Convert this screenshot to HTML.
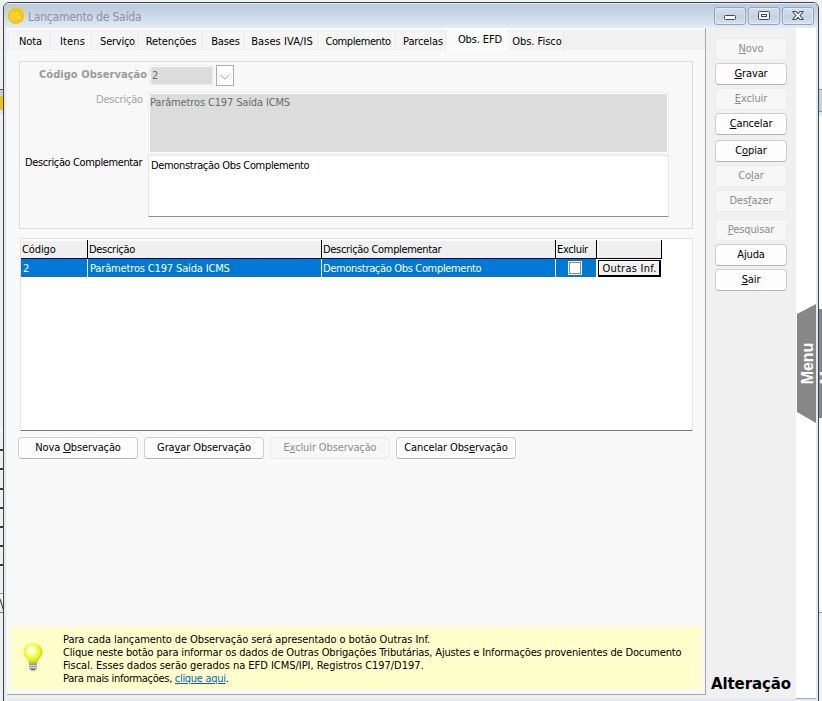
<!DOCTYPE html>
<html lang="pt-BR">
<head>
<meta charset="utf-8">
<title>Lançamento de Saída</title>
<style>
html,body{margin:0;padding:0;}
body{width:822px;height:701px;overflow:hidden;position:relative;background:#f3f3f3;
 font-family:"DejaVu Sans Condensed","Liberation Sans",sans-serif;font-size:11px;color:#000;letter-spacing:-0.12px;}
*{box-sizing:border-box;}
.abs{position:absolute;}
/* background behind the window */
#bgleft{left:0;top:0;width:4px;height:701px;background:#f0f0f0;}
#bgleft i{position:absolute;left:0;width:4px;height:1px;background:#2b2b2b;display:block;}
#bgright{left:818px;top:0;width:4px;height:701px;background:#fafafa;}
#bgright i{position:absolute;left:0;width:4px;display:block;}
/* window frame */
#win{left:3px;top:2px;width:816px;height:705px;border:1px solid #3f434a;border-radius:6px 6px 0 0;
 background:#e1e9f3;overflow:hidden;}
#titlebar{left:0;top:0;width:814px;height:25px;background:linear-gradient(#e6edf6 0,#e6edf6 1px,#bccbdd 1px,#c3d1e2 8px,#d3dfed 17px,#dbe6f2 22px,#e8eef6 25px);}
#title{left:24px;top:6px;font-size:12px;color:#8b919b;letter-spacing:-0.2px;white-space:nowrap;line-height:16px;}
.tbtn{top:4px;width:32px;height:18px;border:1px solid #93a4bb;border-radius:3px;background:linear-gradient(#d4dfec,#c3d2e4 55%,#d6e1ee);box-shadow:inset 0 0 0 1px rgba(255,255,255,.35);}
#client{left:3px;top:25px;width:809px;height:671px;background:#f0f0f0;}
#clienttop{left:0;top:0;width:699px;height:2px;background:#fbfbfb;}
/* tab strip */
#tabs{left:0;top:2px;width:698px;height:20px;background:#f1f1f1;}
.tab{top:2px;height:17px;line-height:19px;text-align:center;white-space:nowrap;background:#f5f5f5;border-left:1px solid #fbfbfb;border-right:1px solid #e9e9e9;}
.tab.sel{top:0px;height:21px;line-height:19px;background:#fafafa;border-color:#fafafa;}
#page{left:0;top:22px;width:699px;height:645px;background:#f9f9f9;border-bottom:1px solid #a6a6a6;}
#vline{left:698px;top:0;width:1px;height:667px;background:#a6a6a6;}
/* right panel */
#rpanel{left:699px;top:0;width:90px;height:671px;background:#f0f0f0;}
#rwhite{left:789px;top:0;width:20px;height:671px;background:#fff;border-bottom:1px solid #a9a9a9;}
.btn{height:22px;border:1px solid #cfcfcf;border-bottom-color:#b4b4b4;border-radius:4px;background:#fdfdfd;text-align:center;line-height:20px;white-space:nowrap;color:#000;}
.btn.dis{background:#f7f7f7;border-color:#ececec;color:#8c8c8c;}
.btn u{text-decoration:underline;text-underline-offset:1px;}
.rb{left:9px;width:72px;}
/* group box */
#grp{left:12px;top:33px;width:674px;height:168px;border:1px solid #dcdcdc;background:#f8f8f8;box-shadow:inset 1px 1px 0 #fdfdfd;}
.lbl{white-space:nowrap;line-height:13px;}
/* grid */
#grid{left:13px;top:210px;width:673px;height:193px;background:#fff;border:1px solid #e3e3e3;border-bottom:1px solid #7a7a7a;}
.hd{top:1px;height:19px;background:#efefef;border-right:1px solid #000;border-bottom:1px solid #000;line-height:19px;padding-left:1px;white-space:nowrap;box-shadow:inset 1px 1px 0 #fafafa;}
.cell{top:20px;height:18px;background:#0078d7;color:#fff;line-height:19px;padding-left:2px;white-space:nowrap;}
/* info box */
#info{left:4px;top:599px;width:690px;height:63px;background:#ffffcc;}
#info .ln{position:absolute;left:52px;white-space:nowrap;line-height:13px;}
#info a{color:#0563c1;text-decoration:underline;}
</style>
</head>
<body>
<div id="bgleft" class="abs"><i style="top:89px;background:#555"></i><i style="top:90px;height:6px;background:#c5cdd8"></i><i style="top:96px;height:14px;background:#f0c31a"></i><i style="top:110px;height:4px;background:#dde3ea"></i><i style="top:430px;background:#fff"></i><i style="top:449px;height:2px;background:#3a3a3a"></i><i style="top:468px;height:2px;background:#3a3a3a"></i><i style="top:488px;height:2px;background:#3a3a3a"></i><i style="top:507px;height:2px;background:#3a3a3a"></i><i style="top:526px;height:2px;background:#3a3a3a"></i><i style="top:545px;height:2px;background:#3a3a3a"></i><i style="top:564px;height:2px;background:#3a3a3a"></i><i style="top:593px;background:#999"></i><i style="top:612px;background:#777"></i><svg class="abs" style="left:0;top:598px" width="4" height="14"><path d="M0 1 L3.5 12" stroke="#555" stroke-width="1.2" fill="none"/></svg></div>
<div id="bgright" class="abs"><i style="top:0;height:89px;background:#f4f4f4"></i><i style="top:89px;height:23px;background:#c9d3df"></i><i style="top:89px;height:1px;background:#8a929c"></i><i style="top:111px;height:1px;background:#8a929c"></i><i style="top:112px;height:4px;background:#e1e7ee"></i><i style="top:309px;height:109px;background:#878787"></i><svg class="abs" style="left:0;top:300px;overflow:hidden" width="4" height="125" viewBox="0 0 4 125"><text transform="translate(13.6,84.2) rotate(-90)" font-family="Liberation Sans, sans-serif" font-weight="bold" font-size="16" fill="#fff">Menu</text></svg><i style="top:612px;height:1px;background:#9a9a9a"></i><i style="top:613px;height:88px;background:#f0f0f0"></i></div>

<div id="win" class="abs">
  <div id="titlebar" class="abs"></div>
  
  <svg class="abs" style="left:3px;top:4px" width="18" height="18" viewBox="0 0 18 18">
    <circle cx="9" cy="9" r="8.3" fill="#f6c70f"/>
    <path d="M4.8 5.6 H9.4 M4.8 5.6 V12 H10.2" fill="none" stroke="#fbdf6e" stroke-width="1"/>
    <path d="M6 7.6 H7.6 M6 9.4 H7.4" fill="none" stroke="#fbdf6e" stroke-width="0.9"/>
    <circle cx="10.4" cy="8.6" r="1.9" fill="none" stroke="#fbe27c" stroke-width="1"/>
    <path d="M11.8 10.1 L13.2 11.8" stroke="#fff0ad" stroke-width="1.3"/>
  </svg>
  <div class="abs tbtn" style="left:710px">
    <div class="abs" style="left:9px;top:7px;width:12px;height:5px;border:1px solid #454a54;border-radius:1.5px;background:#fff;"></div>
  </div>
  <div class="abs tbtn" style="left:744px">
    <div class="abs" style="left:9px;top:3px;width:12px;height:9px;border:1px solid #454a54;border-radius:1.5px;background:#eef2f7;"><div class="abs" style="left:2px;top:2px;width:6px;height:3px;border:1px solid #454a54;"></div></div>
  </div>
  <div class="abs tbtn" style="left:778px">
    <svg class="abs" style="left:8px;top:2px" width="14" height="12" viewBox="0 0 14 12"><path d="M1.6 1.5 H5 L7 3.7 L9 1.5 H12.4 L9 5.5 L12.4 9.5 H9 L7 7.3 L5 9.5 H1.6 L5 5.5 Z" fill="#f4f6f9" stroke="#4a4f59" stroke-width="1.1" stroke-linejoin="round"/></svg>
  </div>
  <div id="title" class="abs">Lançamento de Saída</div>
  <div class="abs" style="left:2px;top:25px;width:1px;height:680px;background:#f3f6fa"></div>
  <div id="client" class="abs">
    <div id="clienttop" class="abs"></div>
    <div id="tabs" class="abs">
      <div class="abs tab" style="left:3px;width:41px;padding-left:0px">Nota</div>
      <div class="abs tab" style="left:44px;width:41px;padding-left:2px;letter-spacing:0.1px">Itens</div>
      <div class="abs tab" style="left:85px;width:47px;padding-left:4px;letter-spacing:-0.25px">Serviço</div>
      <div class="abs tab" style="left:132px;width:64px;padding-left:0px">Retenções</div>
      <div class="abs tab" style="left:196px;width:42px;padding-left:3px">Bases</div>
      <div class="abs tab" style="left:238px;width:74px;padding-left:0px;letter-spacing:0.08px">Bases IVA/IS</div>
      <div class="abs tab" style="left:312px;width:77px;padding-left:1px;letter-spacing:-0.42px">Complemento</div>
      <div class="abs tab" style="left:389px;width:50px;padding-left:4px">Parcelas</div>
      <div class="abs tab sel" style="left:439px;width:61px;padding-left:7px">Obs. EFD</div>
      <div class="abs tab" style="left:500px;width:57px;padding-left:3px;letter-spacing:-0.02px">Obs. Fisco</div>
    </div>
    <div id="page" class="abs"></div>
    <div id="vline" class="abs"></div>

    <div id="grp" class="abs"></div>
    <div class="abs lbl" style="left:32px;top:40px;font-weight:bold;color:#9b9b9b;letter-spacing:0.05px;">Código Observação</div>
    <div class="abs" style="left:142px;top:37px;width:64px;height:20px;border:1px solid #ececec;background:#fff;"></div>
    <div class="abs lbl" style="left:144px;top:39px;width:61px;height:17px;background:#dcdcdc;color:#6b6b6b;padding:2px 0 0 1px;">2</div>
    <div class="abs" style="left:209px;top:37px;width:18px;height:21px;border:1px solid #adadad;background:#fff;">
      <svg class="abs" style="left:3px;top:8px" width="10" height="7" viewBox="0 0 10 7"><path d="M1 1.2 L5 5.2 L9 1.2" fill="none" stroke="#9a9a9a" stroke-width="1"/></svg>
    </div>
    <div class="abs lbl" style="left:89px;top:65px;color:#a3a3a3;letter-spacing:-0.2px;">Descrição</div>
    <div class="abs" style="left:141px;top:64px;width:521px;height:62px;border:1px solid #eeeeee;background:#fff;"></div>
    <div class="abs lbl" style="left:143px;top:66px;width:517px;height:58px;background:#dcdcdc;color:#6b6b6b;padding:2px 0 0 0;letter-spacing:-0.14px;">Parâmetros C197 Saída ICMS</div>
    <div class="abs lbl" style="left:18px;top:128px;letter-spacing:-0.38px;">Descrição Complementar</div>
    <div class="abs lbl" style="left:141px;top:127px;width:521px;height:62px;background:#fff;border:1px solid #e4e4e4;border-bottom:1px solid #8e8e8e;padding:3px 0 0 2px;letter-spacing:-0.33px;">Demonstração Obs Complemento</div>

    <div id="grid" class="abs">
      <div class="abs hd" style="left:0;width:67px">Código</div>
      <div class="abs hd" style="left:67px;width:234px;letter-spacing:-0.3px">Descrição</div>
      <div class="abs hd" style="left:301px;width:234px;letter-spacing:-0.33px">Descrição Complementar</div>
      <div class="abs hd" style="left:535px;width:41px;letter-spacing:-0.35px">Excluir</div>
      <div class="abs hd" style="left:576px;width:65px"></div>
      <div class="abs cell" style="left:0;width:66px">2</div>
      <div class="abs cell" style="left:67px;width:233px;letter-spacing:-0.15px">Parâmetros C197 Saída ICMS</div>
      <div class="abs cell" style="left:301px;width:233px;padding-left:1px;letter-spacing:-0.33px">Demonstração Obs Complemento</div>
      <div class="abs cell" style="left:535px;width:40px"></div>
      <div class="abs" style="left:547px;top:22px;width:14px;height:14px;background:#fff;border:1px solid #fff;"><div style="width:12px;height:12px;border:1px solid #8a8a8a;background:#fff"></div></div>
      <div class="abs" style="left:577px;top:21px;width:63px;height:17px;background:#f0f0f0;border:1px solid #000;border-right-width:2px;border-bottom-width:2px;box-shadow:inset 1px 1px 0 #fff;line-height:15px;text-align:center;white-space:nowrap;padding-left:1px;letter-spacing:0.25px;">Outras Inf.</div>
    </div>

    <div class="abs btn" style="left:11px;top:409px;width:120px;">Nova <u>O</u>bservação</div>
    <div class="abs btn" style="left:137px;top:409px;width:120px;">Gra<u>v</u>ar Observação</div>
    <div class="abs btn dis" style="left:263px;top:409px;width:120px;">E<u>x</u>cluir Observação</div>
    <div class="abs btn" style="left:389px;top:409px;width:120px;">Cancelar Obs<u>e</u>rvação</div>

    <div id="info" class="abs">
      <svg class="abs" style="left:11px;top:15px" width="22" height="30" viewBox="0 0 22 30">
        <defs><radialGradient id="bg1" cx="0.42" cy="0.36" r="0.62"><stop offset="0" stop-color="#ffffff"/><stop offset="0.22" stop-color="#ffffe0"/><stop offset="0.45" stop-color="#f8fc5a"/><stop offset="0.75" stop-color="#e6f01e"/><stop offset="1" stop-color="#a8d312"/></radialGradient></defs>
        <path d="M11 1 C5.5 1 1.5 5 1.5 10 C1.5 14 4.5 16 6.5 19.5 L7.2 22 L14.8 22 L15.5 19.5 C17.5 16 20.5 14 20.5 10 C20.5 5 16.5 1 11 1 Z" fill="url(#bg1)"/>
        <rect x="7" y="21.5" width="8" height="6" rx="1" fill="#9a9a9a"/>
        <rect x="7" y="23" width="8" height="1" fill="#d8d8d8"/>
        <rect x="7" y="25" width="8" height="1" fill="#d8d8d8"/>
        <rect x="9" y="27" width="4" height="1.5" fill="#6e6e6e"/>
      </svg>
      <div class="ln" style="top:6px;letter-spacing:-0.08px">Para cada lançamento de Observação será apresentado o botão Outras Inf.</div>
      <div class="ln" style="top:19px;letter-spacing:-0.15px">Clique neste botão para informar os dados de Outras Obrigações Tributárias, Ajustes e Informações provenientes de Documento</div>
      <div class="ln" style="top:32px;letter-spacing:-0.03px">Fiscal. Esses dados serão gerados na EFD ICMS/IPI, Registros C197/D197.</div>
      <div class="ln" style="top:45px;letter-spacing:-0.3px">Para mais informações, <a>clique aqui</a>.</div>
    </div>

    <div id="rpanel" class="abs">
      <div class="abs btn rb dis" style="top:10px"><u>N</u>ovo</div>
      <div class="abs btn rb" style="top:35px"><u>G</u>ravar</div>
      <div class="abs btn rb dis" style="top:60px"><u>E</u>xcluir</div>
      <div class="abs btn rb" style="top:85px"><u>C</u>ancelar</div>
      <div class="abs btn rb" style="top:112px">C<u>o</u>piar</div>
      <div class="abs btn rb dis" style="top:137px">Co<u>l</u>ar</div>
      <div class="abs btn rb dis" style="top:162px">Des<u>f</u>azer</div>
      <div class="abs btn rb dis" style="top:191px"><u>P</u>esquisar</div>
      <div class="abs btn rb" style="top:216px">A<u>j</u>uda</div>
      <div class="abs btn rb" style="top:241px"><u>S</u>air</div>
      <div class="abs" style="left:5px;top:646px;font-family:'DejaVu Sans','Liberation Sans',sans-serif;font-size:15px;font-weight:bold;letter-spacing:-0.1px;line-height:20px;white-space:nowrap;">Alteração</div>
    </div>
    <div id="rwhite" class="abs">
      <svg class="abs" style="left:1px;top:276px" width="20" height="120" viewBox="0 0 20 120">
        <polygon points="0,10 19,0 19,119 0,108" fill="#878787"/>
        <text transform="translate(16.3,80.2) rotate(-90)" font-family="Liberation Sans, sans-serif" font-weight="bold" font-size="16" fill="#fff">Menu</text>
      </svg>
    </div>
  </div>
</div>
</body>
</html>
